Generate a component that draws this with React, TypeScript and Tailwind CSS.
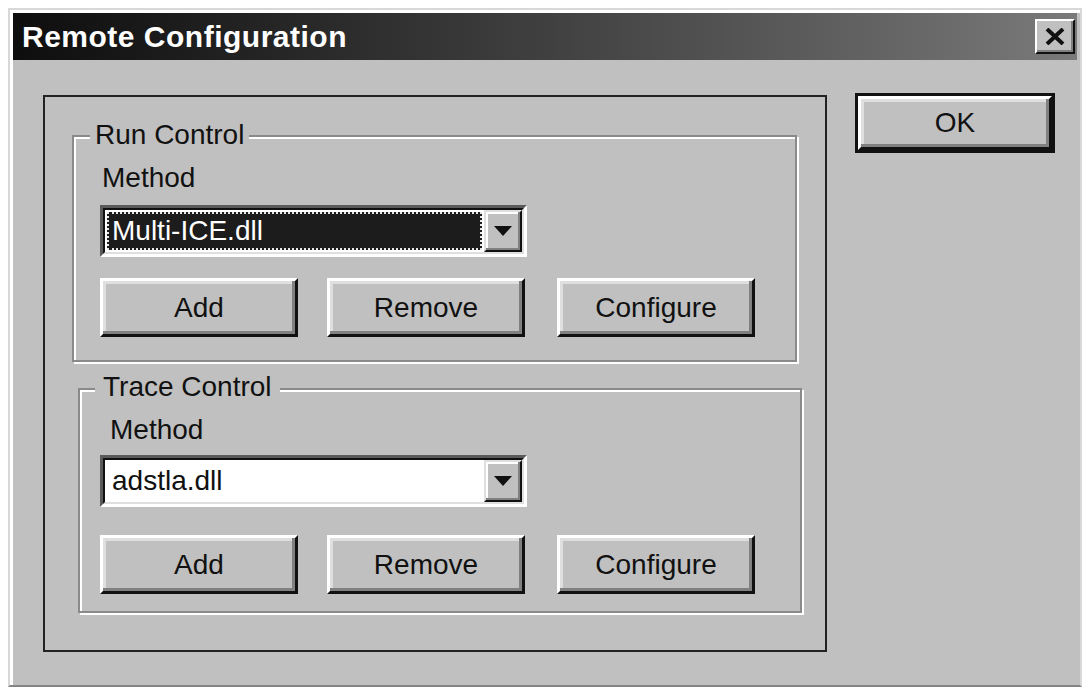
import type { ReactNode } from "react";

// Classic raised push button (white/light top-left, black/grey bottom-right)
function PushButton({ label, className = "" }: { label: string; className?: string }) {
  return (
    <button
      className={`flex h-[59px] w-[198px] items-center justify-center border-[3px] border-t-white border-l-white border-r-[#111] border-b-[#111] bg-[#c0c0c0] text-[28px] text-[#111] shadow-[inset_-3px_-3px_0_#808080,inset_3px_3px_0_#dfdfdf] ${className}`}
    >
      {label}
    </button>
  );
}

function DropArrow() {
  return (
    <div className="flex w-[38px] shrink-0 items-center justify-center border-2 border-t-[#dfdfdf] border-l-[#dfdfdf] border-r-[#111] border-b-[#111] bg-[#c0c0c0] shadow-[inset_-2px_-2px_0_#808080,inset_2px_2px_0_#fff]">
      <svg width="18" height="10" viewBox="0 0 18 10">
        <polygon points="0,0 18,0 9,10" fill="#111" />
      </svg>
    </div>
  );
}

function ComboBox({ value, focused = false }: { value: string; focused?: boolean }) {
  return (
    <div className="flex h-[52px] w-[427px] border-[3px] border-t-[#5a5a5a] border-l-[#5a5a5a] border-r-white border-b-white">
      <div className="flex flex-1 border-2 border-t-[#111] border-l-[#111] border-r-[#dfdfdf] border-b-[#dfdfdf] bg-white">
        <div className="flex flex-1 p-[2px]">
          {focused ? (
            <div className="flex flex-1 items-center border-2 border-dotted border-[#e8e8e8] bg-[#1c1c1c] pl-[3px] text-[28px] text-white">
              {value}
            </div>
          ) : (
            <div className="flex flex-1 items-center pl-[5px] text-[28px] text-[#111]">{value}</div>
          )}
        </div>
        <DropArrow />
      </div>
    </div>
  );
}

// Etched group frame with its caption sitting on the top line
function GroupBox({
  title,
  className,
  legendClass,
  children,
}: {
  title: string;
  className: string;
  legendClass: string;
  children: ReactNode;
}) {
  return (
    <div
      className={`relative flex flex-col border-2 border-[#8a8a8a] shadow-[inset_2px_2px_0_#fff,2px_2px_0_#fff] ${className}`}
    >
      <span className={`absolute bg-[#c0c0c0] text-[28px] leading-[32px] text-[#111] ${legendClass}`}>
        {title}
      </span>
      {children}
    </div>
  );
}

export default function App() {
  return (
    <div className="h-[687px] w-[1082px] overflow-hidden bg-white pl-[8px] pt-[8px] font-['Liberation_Sans',Arial,sans-serif]">
      <div className="flex h-[679px] w-[1074px] flex-col border-2 border-t-[#d8d8d8] border-l-[#d8d8d8] border-r-[#d8d8d8] border-b-[#858585] bg-[#c0c0c0] p-[3px] pb-0 shadow-[inset_3px_3px_0_#fff]">
        {/* title bar */}
        <div className="flex h-[47px] shrink-0 items-center justify-between bg-linear-to-r from-[#0e0e0e] to-[#7a7a7a] pl-[9px] pr-[2px]">
          <span className="text-[30px] font-bold leading-none tracking-[0.5px] text-white">Remote Configuration</span>
          <button className="flex h-[35px] w-[40px] items-center justify-center border-2 border-t-white border-l-white border-r-[#111] border-b-[#111] bg-[#c0c0c0] shadow-[inset_-2px_-2px_0_#808080]">
            <svg width="22" height="17" viewBox="0 0 22 17">
              <path d="M3 1 L19 16 M19 1 L3 16" stroke="#111" strokeWidth="4" />
            </svg>
          </button>
        </div>

        {/* dialog body */}
        <div className="flex items-start">
          <div className="ml-[30px] mt-[35px] flex h-[557px] w-[784px] flex-col border-2 border-[#222]">
            <GroupBox
              title="Run Control"
              className="ml-[27px] mt-[38px] h-[227px] w-[725px] pl-[26px] pt-[25px]"
              legendClass="-top-[18px] left-[16px] px-[5px]"
            >
              <div className="ml-[2px] text-[28px] leading-[32px] text-[#111]">Method</div>
              <div className="mt-[11px]">
                <ComboBox value="Multi-ICE.dll" focused />
              </div>
              <div className="mt-[21px] flex">
                <PushButton label="Add" />
                <PushButton label="Remove" className="ml-[29px]" />
                <PushButton label="Configure" className="ml-[32px]" />
              </div>
            </GroupBox>

            <GroupBox
              title="Trace Control"
              className="ml-[33px] mt-[26px] h-[225px] w-[724px] pl-[20px] pt-[24px]"
              legendClass="-top-[19px] left-[15px] px-[8px]"
            >
              <div className="ml-[10px] text-[28px] leading-[32px] text-[#111]">Method</div>
              <div className="mt-[9px]">
                <ComboBox value="adstla.dll" />
              </div>
              <div className="mt-[28px] flex">
                <PushButton label="Add" />
                <PushButton label="Remove" className="ml-[29px]" />
                <PushButton label="Configure" className="ml-[32px]" />
              </div>
            </GroupBox>
          </div>

          {/* default button with the heavy black rim */}
          <button className="ml-[28px] mt-[33px] h-[60px] w-[200px] border-[3px] border-[#111] bg-[#c0c0c0] p-0">
            <div className="flex h-full w-full items-center justify-center border-[3px] border-t-white border-l-white border-r-[#111] border-b-[#111] text-[28px] text-[#111] shadow-[inset_-3px_-3px_0_#808080,inset_3px_3px_0_#dfdfdf]">
              OK
            </div>
          </button>
        </div>
      </div>
    </div>
  );
}
